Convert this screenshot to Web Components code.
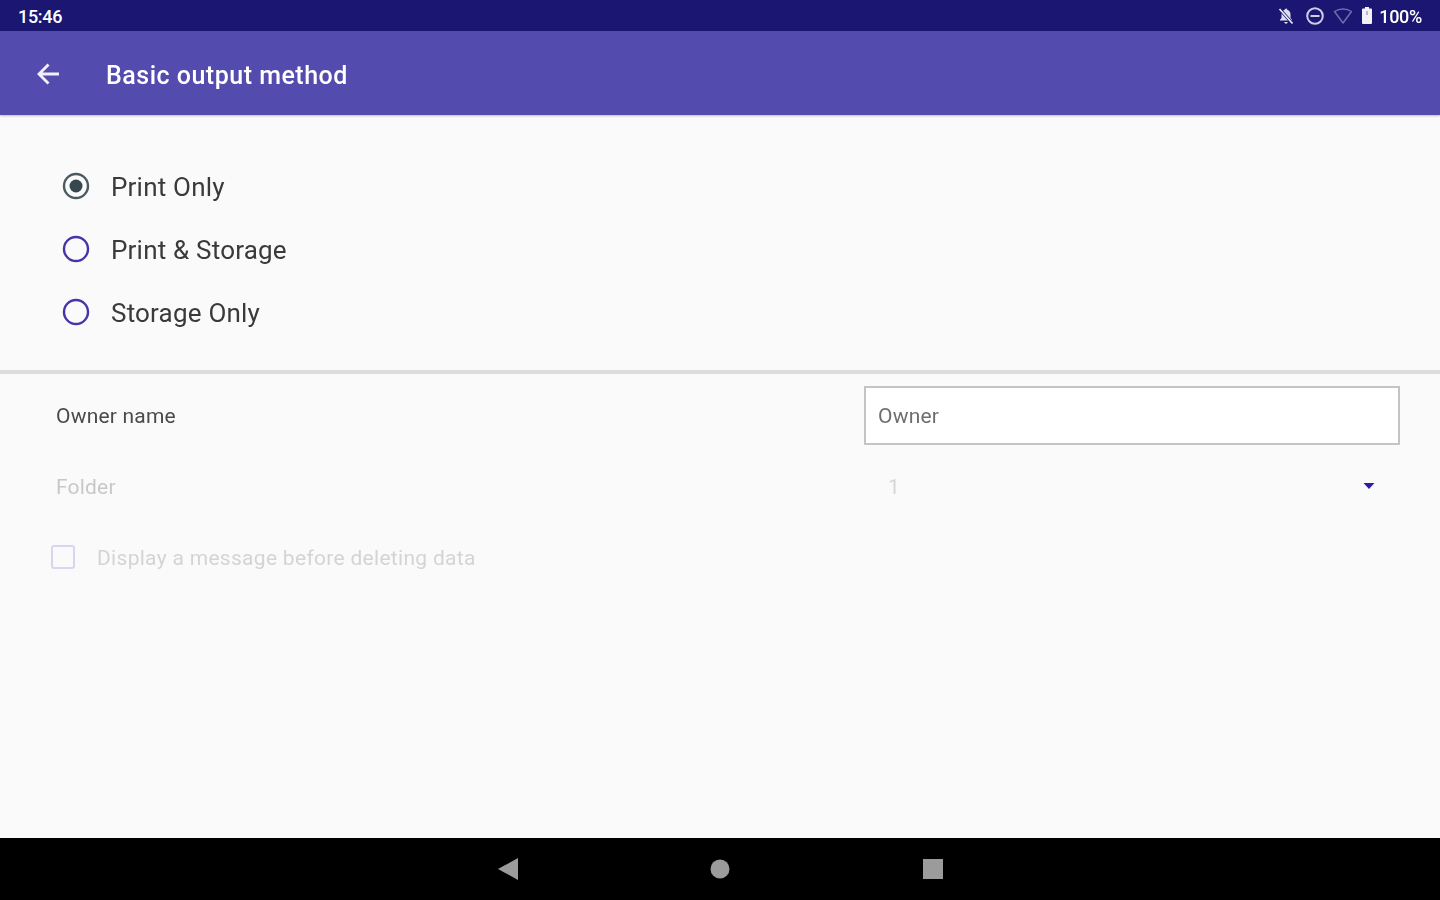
<!DOCTYPE html>
<html>
<head>
<meta charset="utf-8">
<title>Basic output method</title>
<style>
    html, body {
        margin: 0;
        height: 100%;
    }

    body {
        font-family: 'Roboto', sans-serif;
        background-color: #fafafa;
    }
</style>
</head>
<body>
<output-screen>
    <status-bar time="15:46" level="100%"></status-bar>
    <app-bar label="Basic output method"></app-bar>
    <main-radios>
        <radio-row label="Print Only" checked></radio-row>
        <radio-row label="Print &amp; Storage"></radio-row>
        <radio-row label="Storage Only"></radio-row>
    </main-radios>
    <setting-row label="Owner name"><text-box value="Owner"></text-box></setting-row>
    <setting-row label="Folder" disabled><folder-select value="1"></folder-select></setting-row>
    <check-row label="Display a message before deleting data"></check-row>
    <nav-bar></nav-bar>
</output-screen>

<script>
class OutputScreen extends HTMLElement {
    connectedCallback() {
        const shadow = this.attachShadow({mode: 'open'});
        shadow.innerHTML = `<style>
    :host {
        display: flex;
        flex-direction: column;
        height: 900px;
        /* the reference is an upscaled capture, everything in it is a bit soft */
        filter: blur(0.45px);
    }
</style>
<slot></slot>`;
    }
}

class StatusBar extends HTMLElement {
    connectedCallback() {
        const shadow = this.attachShadow({mode: 'open'});
        shadow.innerHTML = `<style>
    :host {
        display: flex;
        align-items: center;
        justify-content: space-between;
        flex: 0 0 31px;
        padding: 0 18px 0 18px;
        background-color: #1a1672;
        color: #ffffff;
        font-size: 18px;
        font-weight: 500;
        letter-spacing: -0.3px;
    }

    .icons {
        display: flex;
        align-items: center;
    }

    svg {
        display: block;
    }

    span {
        padding-top: 1px;
    }

    .mute { margin-right: 10px; }
    .dnd { margin-right: 8px; }
    .wifi { margin-right: 8px; }
    .batt { margin-right: 6px; }
</style>
<span>${this.getAttribute('time')}</span>
<div class="icons">
    <svg class="mute" width="18" height="18" viewBox="0 0 18 18">
        <path d="M9 1.500a1.300 1.300 0 0 1 1.300 1.300c2.100.6 3.200 2.400 3.200 4.700v3.500l1.500 1.700v.8H3v-.8l1.500-1.700V7.500c0-1.200.4-2.400 1.100-3.300" fill="#dddcef"/>
        <path d="M7.300 15h3.400a1.700 1.700 0 0 1-3.400 0z" fill="#dddcef"/>
        <path d="M2.500 2l13 14.500" stroke="#1a1672" stroke-width="3.200"/>
        <path d="M2.500 2l13 14.500" stroke="#eeeef7" stroke-width="1.700"/>
    </svg>
    <svg class="dnd" width="20" height="20" viewBox="0 0 20 20">
        <circle cx="10" cy="10" r="7.800" fill="none" stroke="#cfcee6" stroke-width="2"/>
        <rect x="5.500" y="9" width="9" height="2" fill="#cfcee6"/>
    </svg>
    <svg class="wifi" width="20" height="18" viewBox="0 0 20 18">
        <path d="M1.500 4.500C4 2.800 6.800 2 10 2s6 .8 8.500 2.500L10 16z" fill="none" stroke="#6f6caf" stroke-width="1.500" stroke-linejoin="round"/>
    </svg>
    <svg class="batt" width="12" height="18" viewBox="0 0 12 18">
        <path d="M4 0h4v1.500h2a1 1 0 0 1 1 1V16a1 1 0 0 1-1 1H2a1 1 0 0 1-1-1V2.500a1 1 0 0 1 1-1h2z" fill="#f2f2f8"/>
        <rect x="5" y="4" width="2" height="4" fill="#b9b8d8"/>
    </svg>
    <span>${this.getAttribute('level')}</span>
</div>`;
    }
}

class AppBar extends HTMLElement {
    connectedCallback() {
        const shadow = this.attachShadow({mode: 'open'});
        shadow.innerHTML = `<style>
    :host {
        display: flex;
        align-items: center;
        flex: 0 0 84px;
        box-sizing: border-box;
        padding: 2px 0 0 36px;
        background-color: #534bae;
        color: #ffffff;
        font-size: 25px;
        font-weight: 500;
        letter-spacing: 0.5px;
        box-shadow: 0 1px 2px rgba(0, 0, 0, 0.25);
        z-index: 1;
    }

    svg {
        display: block;
        margin-right: 46px;
    }

    span {
        padding-top: 2px;
    }
</style>
<svg width="24" height="24" viewBox="0 0 24 24">
    <path d="M23 10.500H6.500l7-7L11.500 1.500 1 12l10.500 10.500 2-2-7-7H23z" fill="#f1f0fa"/>
</svg>
<span>${this.getAttribute('label')}</span>`;
    }
}

class MainRadios extends HTMLElement {
    connectedCallback() {
        const shadow = this.attachShadow({mode: 'open'});
        shadow.innerHTML = `<style>
    :host {
        display: block;
        box-sizing: border-box;
        flex: 0 0 259px;
        margin-bottom: 6px;
        padding: 40px 0 0 62px;
        border-bottom: 4px solid #dcdcdc;
    }
</style>
<slot></slot>`;
    }
}

class RadioRow extends HTMLElement {
    connectedCallback() {
        const shadow = this.attachShadow({mode: 'open'});
        const dot = this.hasAttribute('checked');
        shadow.innerHTML = `<style>
    :host {
        display: flex;
        align-items: center;
        height: 63px;
        color: #3a3a3a;
        font-size: 26px;
        letter-spacing: 0.2px;
    }

    svg {
        display: block;
        margin: 0 21px 2px 0;
    }
</style>
<svg width="28" height="28" viewBox="0 0 28 28">
    <circle cx="14" cy="14" r="12" fill="none" stroke="${dot ? '#4a5a60' : '#4436a8'}" stroke-width="2.400"/>
    ${dot ? '<circle cx="14" cy="14" r="6.500" fill="#37474f"/>' : ''}
</svg>
<span>${this.getAttribute('label')}</span>`;
    }
}

class SettingRow extends HTMLElement {
    connectedCallback() {
        const shadow = this.attachShadow({mode: 'open'});
        const off = this.hasAttribute('disabled');
        shadow.innerHTML = `<style>
    :host {
        display: flex;
        align-items: center;
        height: 71px;
        padding: 0 40px 0 56px;
        color: ${off ? '#c8c8c8' : '#4a4a4a'};
        font-size: 21px;
        letter-spacing: 0.2px;
    }

    span {
        width: 808px;
    }
</style>
<span>${this.getAttribute('label')}</span>
<slot></slot>`;
    }
}

class TextBox extends HTMLElement {
    connectedCallback() {
        const shadow = this.attachShadow({mode: 'open'});
        shadow.innerHTML = `<style>
    :host {
        display: flex;
        align-items: center;
        box-sizing: border-box;
        width: 536px;
        height: 59px;
        padding-left: 12px;
        background-color: #ffffff;
        border: 2px solid #c4c4c4;
        color: #6e6e6e;
        font-size: 21px;
    }
</style>
${this.getAttribute('value')}`;
    }
}

class FolderSelect extends HTMLElement {
    connectedCallback() {
        const shadow = this.attachShadow({mode: 'open'});
        shadow.innerHTML = `<style>
    :host {
        display: flex;
        align-items: center;
        justify-content: space-between;
        box-sizing: border-box;
        width: 536px;
        padding: 0 25px 0 24px;
        color: #d6d6d6;
        font-size: 21px;
    }

    svg {
        display: block;
        margin-bottom: 2px;
    }
</style>
<span>${this.getAttribute('value')}</span>
<svg width="12" height="8" viewBox="0 0 12 8">
    <path d="M0.500 1h11L6 7z" fill="#2a1f9e"/>
</svg>`;
    }
}

class CheckRow extends HTMLElement {
    connectedCallback() {
        const shadow = this.attachShadow({mode: 'open'});
        shadow.innerHTML = `<style>
    :host {
        display: flex;
        align-items: center;
        height: 71px;
        padding-left: 51px;
        color: #d4d4d4;
        font-size: 21px;
        letter-spacing: 0.3px;
    }

    i {
        display: block;
        box-sizing: border-box;
        width: 24px;
        height: 24px;
        margin: 0 22px 2px 0;
        border: 2px solid #d8d6ee;
        border-radius: 3px;
    }
</style>
<i></i>
<span>${this.getAttribute('label')}</span>`;
    }
}

class NavBar extends HTMLElement {
    connectedCallback() {
        const shadow = this.attachShadow({mode: 'open'});
        shadow.innerHTML = `<style>
    :host {
        display: flex;
        align-items: center;
        justify-content: center;
        height: 62px;
        margin-top: auto;
        background-color: #000000;
    }

    svg {
        display: block;
    }

    .home { margin: 0 193px 0 190px; }
</style>
<svg width="23" height="24" viewBox="0 0 23 24"><path d="M1 12L21 1v22z" fill="#9b9b9b"/></svg>
<svg class="home" width="20" height="20" viewBox="0 0 20 20"><circle cx="10" cy="10" r="9.500" fill="#9b9b9b"/></svg>
<svg width="20" height="22" viewBox="0 0 20 22"><rect x="0" y="1" width="20" height="20" fill="#9b9b9b"/></svg>`;
    }
}

customElements.define('output-screen', OutputScreen);
customElements.define('status-bar', StatusBar);
customElements.define('app-bar', AppBar);
customElements.define('main-radios', MainRadios);
customElements.define('radio-row', RadioRow);
customElements.define('setting-row', SettingRow);
customElements.define('text-box', TextBox);
customElements.define('folder-select', FolderSelect);
customElements.define('check-row', CheckRow);
customElements.define('nav-bar', NavBar);
</script>
</body>
</html>
